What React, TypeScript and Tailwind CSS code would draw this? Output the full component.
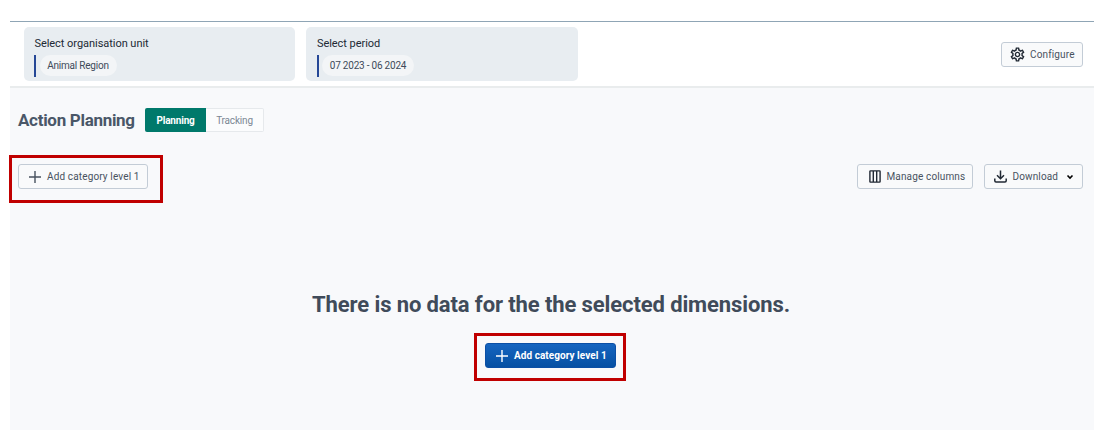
import React from 'react';
import { MdOutlineSettings } from 'react-icons/md';

const outlineButton =
  'relative flex h-[25px] shrink-0 items-center whitespace-nowrap rounded-[3px] border border-[#c3ccd6] bg-[#f9fafb] text-[10px] tracking-[0.14px] text-[#48525f]';

function PlusIcon({ className }: { className: string }) {
  return (
    <svg viewBox="0 0 14 14" className={className} fill="none" stroke="currentColor" strokeWidth="1.4">
      <path d="M7 1v12M1 7h12" />
    </svg>
  );
}

function ColumnsIcon() {
  return (
    <svg viewBox="0 0 12 13" className="ml-[11px] h-[13px] w-[12px] text-[#212934]" fill="none" stroke="currentColor" strokeWidth="1.4">
      <rect x="0.900" y="0.900" width="10.200" height="11.200" rx="0.600" />
      <path d="M4.300 1v11M7.700 1v11" />
    </svg>
  );
}

function DownloadIcon() {
  return (
    <svg viewBox="0 0 13 13" className="ml-[9px] size-[13px] text-[#212934]" fill="none" stroke="currentColor" strokeWidth="1.500">
      <path d="M6.500 0.500v8M3 5.300l3.500 3.500L10 5.300M0.800 8.500v2.300q0 1.200 1.200 1.200h9q1.200 0 1.200-1.200V8.500" />
    </svg>
  );
}

function Selection({ label, value, chip }: { label: string; value: string; chip: string }) {
  return (
    <div className="h-[54px] w-[271.500px] rounded-[5px] bg-[#e8edf1] pl-[10.500px] pt-[9px]">
      <div className="h-[15px] whitespace-nowrap pl-[0.400px] text-[11px] leading-[15px] tracking-[-0.040px] text-[#212934]">{label}</div>
      <div className="mt-[4px] flex h-[22px] items-start border-l-2 border-[#254796] pl-[3px]">
        <span className={`ml-[0.500px] flex h-[21px] items-center justify-center whitespace-nowrap rounded-full bg-[#f3f5f7] text-[10px] tracking-[-0.220px] text-[#404b5a] ${chip}`}>
          {value}
        </span>
      </div>
    </div>
  );
}

export default function App() {
  return (
    <div className="h-[442px] w-[1100px] overflow-hidden bg-white pl-[10px] pt-[21px] font-['Roboto',sans-serif]">
      <div className="flex h-[409px] w-[1084px] flex-col border-t border-[#8fa5b5] bg-[#f8f9fb]">
        <header className="flex h-[66px] shrink-0 items-start border-b-2 border-[#e9eced] bg-white pl-[13.500px] pt-[5px]">
          <Selection label="Select organisation unit" value="Animal Region" chip="w-[77px]" />
          <div className="w-[11px]" />
          <Selection label="Select period" value="07 2023 - 06 2024" chip="w-[92px]" />
          <button className={`${outlineButton} ml-auto mr-[11px] mt-[15px] w-[82px]`}>
            <MdOutlineSettings className="ml-[7px] size-[17px] text-[#212934]" />
            <span className="ml-[4px]">Configure</span>
          </button>
        </header>
        <div className="mt-[20px] flex h-[24px] items-center pl-[8px]">
          <h1 className="w-[127px] whitespace-nowrap text-[17px] font-bold leading-[24px] tracking-[-0.300px] text-[#4a5768]">Action Planning</h1>
          <div className="flex h-[24px] text-[10px] tracking-[-0.180px]">
            <button className="w-[61px] rounded-l-[2px] bg-[#00796b] font-bold text-white">Planning</button>
            <button className="w-[58px] rounded-r-[2px] border border-l-0 border-[#e6e9ec] bg-[#fbfcfd] text-[#7b8794]">Tracking</button>
          </div>
        </div>
        <div className="mt-[32px] flex h-[25px] items-center pl-[8px] pr-[11px]">
          <button className={`${outlineButton} w-[130px]`}>
            <PlusIcon className="ml-[9px] size-[14px]" />
            <span className="ml-[5px]">Add category level 1</span>
            <span className="absolute -left-[10px] -top-[10px] h-[48px] w-[154px] border-[3px] border-[#c00000]" />
          </button>
          <button className={`${outlineButton} ml-auto w-[116px]`}>
            <ColumnsIcon />
            <span className="ml-[5.500px]">Manage columns</span>
          </button>
          <button className={`${outlineButton} ml-[11px] w-[99px]`}>
            <DownloadIcon />
            <span className="ml-[5.500px]">Download</span>
            <svg viewBox="0 0 8 6" className="ml-[8px] mt-px h-[6px] w-[8px] text-black" fill="none" stroke="currentColor" strokeWidth="1.600">
              <path d="M1.500 1.500 4 4l2.500-2.500" />
            </svg>
          </button>
        </div>
        <main className="mt-[102px] flex flex-col items-center">
          <h2 className="h-[28px] -translate-x-px whitespace-nowrap text-[22px] font-bold leading-[28px] tracking-[-0.110px] text-[#404b5a]">There is no data for the the selected dimensions.</h2>
          <button className="relative mt-[24px] mr-[3px] flex h-[25px] w-[131px] items-center whitespace-nowrap rounded-[3px] border border-[#0b4fa5] bg-gradient-to-b from-[#1565c0] to-[#0650a3] text-[10px] font-bold tracking-[0.050px] text-white">
            <PlusIcon className="ml-[9px] size-[14px]" />
            <span className="ml-[5px]">Add category level 1</span>
            <span className="absolute -left-[12px] -top-[11px] h-[48px] w-[152px] border-[3px] border-[#c00000]" />
          </button>
        </main>
      </div>
    </div>
  );
}
